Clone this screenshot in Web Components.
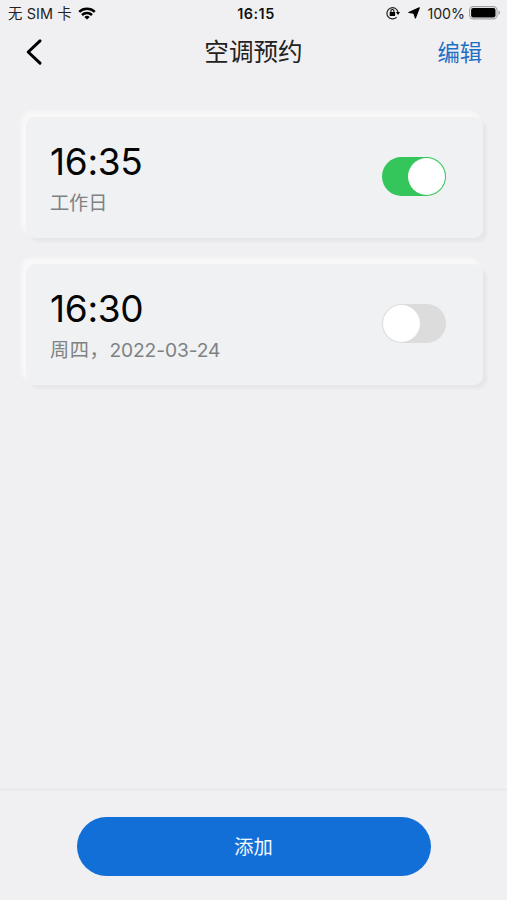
<!DOCTYPE html>
<html lang="zh-CN">
<head>
    <meta charset="utf-8">
    <meta name="viewport" content="width=device-width, initial-scale=1">
    <title>空调预约</title>
    <style>
        html, body {
            margin: 0;
            height: 100%;
        }

        body {
            background: #f0f0f2;
            color: #111;
            font-family: Inter, "Noto Sans CJK SC", sans-serif;
            overflow: hidden;
        }
    </style>
</head>
<body>
    <schedule-app>
        <status-bar slot="top" carrier="无 SIM 卡" time="16:15" battery="100%"></status-bar>
        <nav-bar slot="top">
            空调预约
            <span slot="action">编辑</span>
        </nav-bar>
        <schedule-card time="16:35" active>工作日</schedule-card>
        <schedule-card time="16:30"><span>周四，</span>2022-03-24</schedule-card>
        <pill-button slot="bottom">添加</pill-button>
    </schedule-app>

    <template id="schedule-app-template">
        <style>
            :host {
                display: flex;
                flex-direction: column;
                height: 100vh;
            }

            main {
                flex: 1;
                display: flex;
                flex-direction: column;
                gap: 26px;
                padding: 39px 24px 0 26px;
            }

            footer {
                display: flex;
                justify-content: center;
                height: 83px;
                padding-top: 26px;
                border-top: 3px solid #ebebed;
                box-sizing: content-box;
            }
        </style>
        <slot name="top"></slot>
        <main><slot></slot></main>
        <footer><slot name="bottom"></slot></footer>
    </template>

    <template id="status-bar-template">
        <style>
            :host {
                display: grid;
                grid-template-columns: 1fr auto 1fr;
                align-items: center;
                box-sizing: border-box;
                height: 26px;
                padding: 1px 6px 0 8px;
                font-size: 14.4px;
                line-height: 26px;
                color: #222;
            }

            div {
                display: flex;
                align-items: center;
            }

            .time {
                font-weight: 600;
                font-size: 14.4px;
                letter-spacing: .5px;
                color: #111;
                margin-left: 3px;
            }

            .right {
                justify-content: flex-end;
            }

            svg {
                display: block;
                flex: none;
                margin-bottom: 2px;
            }

            .wifi {
                margin-left: 6px;
            }

            .carrier {
                letter-spacing: .1px;
            }

            .level {
                font-size: 14.2px;
            }

            .lock {
                margin-right: 8px;
            }

            .arrow {
                margin-right: 7px;
            }

            .battery {
                margin-left: 4px;
            }
        </style>
        <div>
            <span class="carrier"></span>
            <svg class="wifi" width="18" height="13" viewBox="0 0 18 13">
                <g fill="none" stroke="#000" stroke-width="2.5">
                    <path d="M1.2 4.9a11.3 11.3 0 0 1 15.6 0"/>
                    <path d="M4 8a7.2 7.2 0 0 1 10 0"/>
                </g>
                <path d="M9 12.5 6.3 9.9a4 4 0 0 1 5.4 0z"/>
            </svg>
        </div>
        <div class="time"></div>
        <div class="right">
            <svg class="lock" width="14" height="14" viewBox="0 0 14 14">
                <path d="M10.6 11.2A5.6 5.6 0 1 1 12 6" fill="none" stroke="#222" stroke-width="1.2"/>
                <path d="M9.9 6h4.1l-2 3z"/>
                <rect x="3.7" y="6" width="5.4" height="4" rx=".5"/>
                <path d="M4.9 6.2V5a1.5 1.5 0 0 1 3 0v1.2" fill="none" stroke="#000" stroke-width="1.1"/>
            </svg>
            <svg class="arrow" width="12" height="12" viewBox="0 0 12 12">
                <path d="M11.3.7 7.4 11 5.9 6.3.8 5.5z" stroke="#000" stroke-width="1.1" stroke-linejoin="round"/>
            </svg>
            <span class="level"></span>
            <svg class="battery" width="32" height="14" viewBox="0 0 32 14">
                <rect x=".6" y=".6" width="27.4" height="12.3" rx="3.6" fill="#f5f5f6" stroke="#a0a0a3" stroke-width="1.1"/>
                <rect x="2.1" y="2" width="24.4" height="9.5" rx="2"/>
                <path d="M29.5 4.6c2 .7 2 3.6 0 4.3z" fill="#a0a0a3"/>
            </svg>
        </div>
    </template>

    <template id="nav-bar-template">
        <style>
            :host {
                display: grid;
                grid-template-columns: 1fr auto 1fr;
                align-items: center;
                height: 52px;
                padding: 0 25px;
            }

            svg {
                display: block;
            }

            h1 {
                margin: 0;
                font-size: 24.6px;
                font-weight: 400;
                line-height: 52px;
                color: #222;
            }

            .action {
                justify-self: end;
                font-size: 22.3px;
                line-height: 50px;
                padding-top: 2px;
                color: #1f70c5;
            }
        </style>
        <svg width="18" height="28" viewBox="0 0 18 28">
            <path d="M15 2.8 3.2 14 15 25.2" fill="none" stroke="#000" stroke-width="3" stroke-linecap="round" stroke-linejoin="round"/>
        </svg>
        <h1><slot></slot></h1>
        <div class="action"><slot name="action"></slot></div>
    </template>

    <template id="schedule-card-template">
        <style>
            :host {
                display: flex;
                align-items: center;
                justify-content: space-between;
                box-sizing: border-box;
                height: 121px;
                padding: 0 37px 2px 24px;
                border-radius: 9px;
                background: #eff1f2;
                box-shadow: -4px -5px 3px 1px rgba(255,255,255, .5), 4px 4px 3px rgba(0,0,0, .038);
            }

            .time {
                font-size: 37px;
                line-height: 44px;
                letter-spacing: -.3px;
                margin-top: 4px;
                color: #050505;
            }

            .repeat {
                font-size: 19.2px;
                line-height: 28px;
                letter-spacing: -.1px;
                margin-top: 5px;
                color: #808183;
            }

            ::slotted(span) {
                letter-spacing: .6px;
            }
        </style>
        <div>
            <div class="time"></div>
            <div class="repeat"><slot></slot></div>
        </div>
        <toggle-switch></toggle-switch>
    </template>

    <template id="toggle-switch-template">
        <style>
            :host {
                display: flex;
                box-sizing: border-box;
                width: 64px;
                height: 39px;
                padding: 1px;
                border-radius: 20px;
                background: #dcdcdd;
                cursor: pointer;
            }

            :host([checked]) {
                justify-content: flex-end;
                background: #34c65b;
            }

            .knob {
                width: 37px;
                height: 37px;
                border-radius: 50%;
                background: #fff;
            }
        </style>
        <div class="knob"></div>
    </template>

    <template id="pill-button-template">
        <style>
            :host {
                display: block;
            }

            button {
                display: block;
                width: 354px;
                height: 59px;
                padding: 2px 0 0;
                border: 0;
                border-radius: 30px;
                background: #126fd8;
                color: #f4f9ff;
                font: inherit;
                font-size: 19.3px;
                line-height: 57px;
            }
        </style>
        <button><slot></slot></button>
    </template>

    <script>
        (function(){
            class BaseElement extends HTMLElement {
                constructor() {
                    super();
                    const template = document.getElementById(this.localName + '-template').content;
                    this.shdw = this.attachShadow({mode: 'open'});
                    this.shdw.appendChild(template.cloneNode(true));
                }

                fill(selector, attrName) {
                    this.shdw.querySelector(selector).textContent = this.getAttribute(attrName);
                }
            }

            class ScheduleApp extends BaseElement {}

            class NavBar extends BaseElement {}

            class PillButton extends BaseElement {}

            class StatusBar extends BaseElement {
                connectedCallback() {
                    this.fill('.carrier', 'carrier');
                    this.fill('.time', 'time');
                    this.fill('.level', 'battery');
                }
            }

            class ToggleSwitch extends BaseElement {
                connectedCallback() {
                    this.addEventListener('click', () => this.toggleAttribute('checked'));
                }
            }

            class ScheduleCard extends BaseElement {
                connectedCallback() {
                    this.fill('.time', 'time');
                    this.shdw.querySelector('toggle-switch')
                        .toggleAttribute('checked', this.hasAttribute('active'));
                }
            }

            window.customElements.define('toggle-switch', ToggleSwitch);
            window.customElements.define('schedule-card', ScheduleCard);
            window.customElements.define('status-bar', StatusBar);
            window.customElements.define('nav-bar', NavBar);
            window.customElements.define('pill-button', PillButton);
            window.customElements.define('schedule-app', ScheduleApp);
        })();
    </script>
</body>
</html>
